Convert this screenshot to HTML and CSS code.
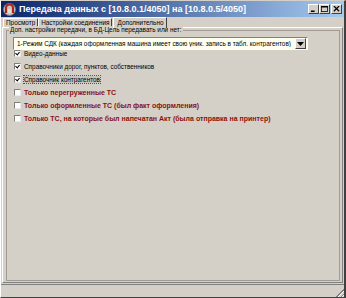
FILE: index.html
```html
<!DOCTYPE html>
<html lang="ru">

<head>
    <meta charset="UTF-8">
    <title>Передача данных</title>
    <link rel="stylesheet" href="styles.css">
</head>

<body>
    <div class="window">
        <div class="titlebar">
            <svg class="app-icon" width="13" height="13" viewBox="0 0 13 13">
                <circle cx="6.5" cy="6.5" r="6" fill="#c8c4bc" stroke="#7a7670"/>
                <path d="M3 10 V5 a3.5 3.5 0 0 1 7 0 V10" fill="none" stroke="#b0201c" stroke-width="2"/>
                <rect x="5" y="6" width="3" height="4" fill="#e0e0e0"/>
            </svg>
            <span class="title">Передача данных с [10.8.0.1/4050] на [10.8.0.5/4050]</span>
            <div class="caption-btns">
                <span class="cbtn"><svg width="9" height="8" viewBox="0 0 9 8"><rect x="1" y="6" width="5" height="2" fill="#000"/></svg></span>
                <span class="cbtn"><svg width="9" height="8" viewBox="0 0 9 8"><rect x="0.5" y="0.5" width="8" height="7" fill="none" stroke="#000"/><rect x="0" y="0" width="9" height="2" fill="#000"/></svg></span>
                <span class="cbtn close"><svg width="9" height="8" viewBox="0 0 9 8"><path d="M1 0 L8 7 M8 0 L1 7" stroke="#000" stroke-width="1.6"/></svg></span>
            </div>
        </div>

        <div class="tabs">
            <div class="tab">Просмотр</div>
            <div class="tab">Настройки соединения</div>
            <div class="tab active">Дополнительно</div>
        </div>

        <div class="tab-panel">
            <div class="group">
                <div class="group-head">
                    <span class="group-title">Доп. настройки передачи, в БД-Цель передавать или нет:</span>
                </div>
                <div class="combo">
                    <span class="combo-text">1-Режим СДК (каждая оформленная машина имеет свою уник. запись в табл. контрагентов)</span>
                    <span class="combo-btn"><svg width="7" height="4" viewBox="0 0 7 4"><path d="M0 0 H7 L3.5 4 Z" fill="#000"/></svg></span>
                </div>
                <label class="check"><span class="box checked"></span>Видео-данные</label>
                <label class="check"><span class="box checked"></span>Справочники дорог, пунктов, собственников</label>
                <label class="check"><span class="box checked"></span><span class="focus">Справочник контрагентов</span></label>
                <label class="check warn"><span class="box"></span>Только перегруженные ТС</label>
                <label class="check warn"><span class="box"></span>Только оформленные ТС (был факт оформления)</label>
                <label class="check warn"><span class="box"></span>Только ТС, на которые был напечатан Акт (была отправка на принтер)</label>
            </div>
        </div>

        <div class="statusbar">
            <span class="grip"></span>
        </div>
    </div>
</body>

</html>
```

FILE: styles.css
```css
* {
    margin: 0;
    padding: 0;
    box-sizing: border-box;
}

body {
    width: 346px;
    height: 298px;
    background-color: #d4d0c8;
    font-family: 'Liberation Sans', sans-serif;
    font-size: 6.4px;
    color: #000;
    overflow: hidden;
}

.window {
    width: 346px;
    height: 298px;
    display: flex;
    flex-direction: column;
    background-color: #d4d0c8;
    border-top: 1px solid #d4d0c8;
    border-left: 1px solid #ffffff;
    border-right: 2px solid #404040;
    border-bottom: 1px solid #404040;
}

/* заголовок окна */
.titlebar {
    height: 16px;
    display: flex;
    align-items: center;
    padding: 0 2px;
    background: linear-gradient(to right, #0a246a, #a6caf0);
}

.app-icon {
    margin-right: 3px;
    flex-shrink: 0;
}

.title {
    color: #fff;
    font-weight: 700;
    font-size: 9px;
    white-space: nowrap;
    flex: 1;
}

.caption-btns {
    display: flex;
}

.cbtn {
    width: 11px;
    height: 10px;
    display: flex;
    align-items: center;
    justify-content: center;
    background-color: #d4d0c8;
    border-top: 1px solid #fff;
    border-left: 1px solid #fff;
    border-right: 1px solid #404040;
    border-bottom: 1px solid #404040;
}

.cbtn svg {
    width: 7px;
    height: 6px;
}

.cbtn.close {
    margin-left: 1px;
}

/* вкладки */
.tabs {
    display: flex;
    align-items: flex-end;
    height: 10px;
    padding-left: 2px;
}

.tab {
    height: 9px;
    padding: 0 2px;
    line-height: 8px;
    border-top: 1px solid #fff;
    border-left: 1px solid #fff;
    border-right: 1px solid #404040;
}

.tab.active {
    height: 11px;
    margin-left: 1px;
    padding: 0 3px;
    line-height: 9px;
    background-color: #d4d0c8;
    position: relative;
    z-index: 3;
    margin-bottom: -1px;
}

.tab-panel {
    flex: 1;
    margin: 0 1px;
    padding: 0 2px 1px 3px;
    border-top: 1px solid #fff;
    border-left: 1px solid #fff;
    border-right: 1px solid #808080;
    border-bottom: 1px solid #808080;
    display: flex;
}

/* рамка группы */
.group {
    flex: 1;
    margin-top: 2px;
    padding: 0 4px 0 6px;
    border-left: 1px solid #a09c94;
    border-right: 1px solid #a09c94;
    border-bottom: 1px solid #a09c94;
}

.group-head {
    display: flex;
    align-items: center;
    height: 8px;
    margin: -4px -5px 0 -7px;
}

.group-head::before,
.group-head::after {
    content: "";
    border-top: 1px solid #a09c94;
}

.group-head::before {
    width: 3px;
}

.group-head::after {
    flex: 1;
}

.group-title {
    padding: 0 1px;
    line-height: 8px;
    white-space: nowrap;
    background-color: #d4d0c8;
}

.combo {
    width: 295px;
    height: 13px;
    margin-top: 3px;
    display: flex;
    align-items: center;
    background-color: #fffff0;
    border-top: 1px solid #808080;
    border-left: 1px solid #808080;
    border-right: 1px solid #fff;
    border-bottom: 1px solid #fff;
    padding-left: 3px;
    padding-right: 1px;
}

.combo-text {
    flex: 1;
    white-space: nowrap;
    overflow: hidden;
}

.combo-btn {
    width: 11px;
    height: 11px;
    display: flex;
    align-items: center;
    justify-content: center;
    background-color: #d4d0c8;
    border-top: 1px solid #fff;
    border-left: 1px solid #fff;
    border-right: 1px solid #404040;
    border-bottom: 1px solid #404040;
}

.check {
    display: flex;
    align-items: center;
    height: 13px;
    padding-left: 1px;
    white-space: nowrap;
}

.combo + .check {
    margin-top: -3px;
}

.check.warn {
    color: #8b1010;
    font-weight: 700;
    font-size: 7px;
}

.box {
    width: 7px;
    height: 7px;
    margin-right: 3px;
    background-color: #fff;
    border-top: 1px solid #808080;
    border-left: 1px solid #808080;
    border-right: 1px solid #e8e8e8;
    border-bottom: 1px solid #e8e8e8;
    position: relative;
}

.box.checked::after {
    content: "";
    position: absolute;
    left: 1px;
    top: 0;
    width: 2px;
    height: 3px;
    border-right: 1px solid #000;
    border-bottom: 1px solid #000;
    transform: rotate(40deg);
}

.focus {
    outline: 1px dotted #555;
    background-color: #c8c4bc;
}

/* строка состояния */
.statusbar {
    height: 13px;
    margin-top: 1px;
    border-top: 1px solid #808080;
    display: flex;
    justify-content: flex-end;
    align-items: flex-end;
}

.grip {
    width: 9px;
    height: 9px;
    background: repeating-linear-gradient(135deg, #d4d0c8 0 1px, #808080 1px 2px, #fff 2px 3px);
    clip-path: polygon(100% 0, 100% 100%, 0 100%);
}
```
